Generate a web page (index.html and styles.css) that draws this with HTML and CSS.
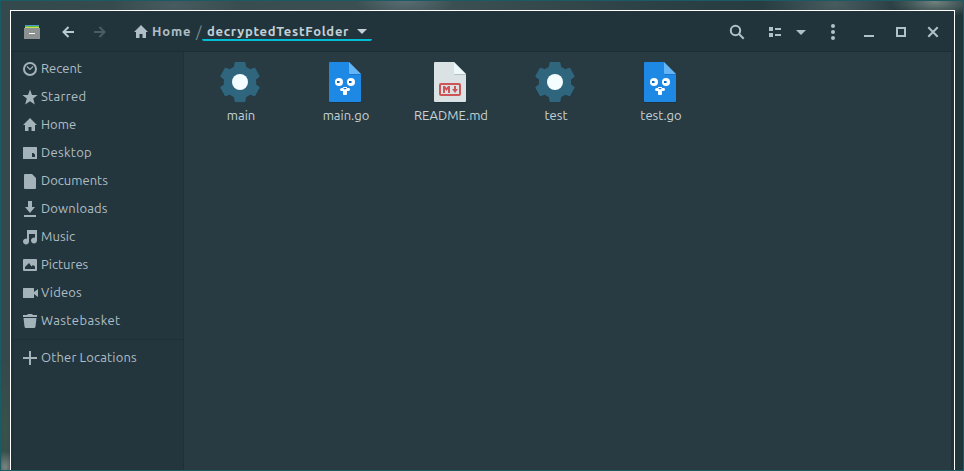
FILE: index.html
```html
<!DOCTYPE html>
<html lang="en">
<head>
<meta charset="utf-8">
<title>decryptedTestFolder</title>
<link rel="stylesheet" href="styles.css">
</head>
<body>
<svg class="defs" aria-hidden="true">
  <symbol id="house" viewBox="0 0 14 13"><path d="M7 0 0 7h2v6h3.500V9h3v4H12V7h2z"/></symbol>
  <symbol id="gear" viewBox="0 0 40 41">
    <path class="gear-shadow" d="M15 2h10l1 5 4 2 5-2 5 8-4 4v4l4 4-5 8-5-2-4 2-1 5H15l-1-5-4-2-5 2-5-8 4-4v-4l-4-4 5-8 5 2 4-2z"/>
    <path class="gear-body" d="M15.4 0h9.2q.7 0 .8.8l.8 4.2q2.2.8 4 2.2l4-1.4q.7-.2 1 .3l4.400 7.800q.3.700-.2 1.100L36 17.800q.4 2.200 0 4.400l3.400 2.800q.5.400.2 1.100l-4.400 7.800q-.3.500-1 .3l-4-1.400q-1.800 1.400-4 2.200l-.8 4.200q-.1.800-.8.800h-9.200q-.7 0-.8-.8l-.8-4.200q-2.200-.8-4-2.200l-4 1.400q-.7.200-1-.3L.4 26.100q-.3-.7.2-1.100L4 22.200q-.4-2.200 0-4.400L.6 15q-.5-.4-.2-1.100l4.400-7.800q.3-.5 1-.3l4 1.400q1.800-1.400 4-2.200l.8-4.200q.1-.8.800-.8z"/>
    <circle cx="20" cy="20" r="8" fill="#f4fdff"/>
  </symbol>
  <symbol id="gofile" viewBox="0 0 40 41">
    <path fill="#1d343e" d="M5 2h31v38q0 1-1 1H5q-1 0-1-1V3z"/>
    <path fill="#1e88e5" d="M5 0h19l12 12v27q0 1-1 1H5q-1 0-1-1V1q0-1 1-1z"/>
    <path fill="#283b42" d="M24 0h12v12z"/>
    <path fill="#1976d2" d="M24 12h12v1H25z"/>
    <path fill="#64b5f6" d="M24 0l12 12H25q-1 0-1-1z"/>
    <circle cx="14" cy="20" r="4" fill="#fff"/><circle cx="26" cy="20" r="4" fill="#fff"/>
    <path fill="#0d67bd" d="M12 19h2v2h-2zM24 19h2v2h-2z"/><path fill="#68aeea" d="M14 19h1v2h-1zM26 19h1v2h-1z"/>
    <path fill="#fff" d="M17 26h1v-1h4v1h2q1 0 1 1.500T23 29h-1v3q0 1-1 1h-2q-1 0-1-1v-3h-1q-2 0-2-1.500T17 26z"/>
    <path fill="#1976d2" d="M18.500 26h3v.5l-1 .8h-1l-1-.8z"/>
  </symbol>
  <symbol id="mdfile" viewBox="0 0 40 41">
    <path fill="#1d343e" d="M5 2h31v38q0 1-1 1H5q-1 0-1-1V3z"/>
    <path fill="#dae2e4" d="M5 0h19l12 12v27q0 1-1 1H5q-1 0-1-1V1q0-1 1-1z"/>
    <path fill="#283b42" d="M24 0h12v12z"/>
    <path fill="#b5bfc2" d="M24 12h12v1H25z"/>
    <path fill="#edf8fa" d="M24 0l12 12H25q-1 0-1-1z"/>
    <rect x="10" y="22" width="20" height="11" rx="1" fill="none" stroke="#cf5457" stroke-width="2"/>
    <path fill="#cf5457" d="M13 24h2l1.500 2 1.500-2h2v7h-2v-4l-1.500 2-1.500-2v4h-2zM24 24h2v3h2l-3 4-3-4h2z"/>
  </symbol>
</svg>

<main class="window">
  <header class="titlebar">
    <svg class="app" viewBox="0 0 16 14"><path fill="#5294c4" d="M1 0h14v1H1z"/><path fill="#50c44b" d="M1 1h14v1H1z"/><path fill="#d4d84d" d="M1 2h14v1H1z"/><path fill="#8c9291" d="M0 3h16v10.500q0 .5-.5.500H.5q-.5 0-.5-.5z"/><path fill="#fff" d="M5 8h6v1H5z"/></svg>
    <svg class="arrow" viewBox="0 0 12 12"><path d="M12 6H1.500M6.500 1l-5 5 5 5"/></svg>
    <svg class="arrow forward" viewBox="0 0 12 12"><path d="M0 6h10.500M5.500 1l5 5-5 5"/></svg>
    <nav class="path">
      <svg class="path-home"><use href="#house"/></svg>
      <span class="crumb">Home</span>
      <span class="slash">/</span>
      <span class="current"><span class="folder">decryptedTestFolder</span><svg class="caret" viewBox="0 0 10 5"><path d="M0 0h10L5 5z"/></svg></span>
    </nav>
    <div class="controls">
      <svg viewBox="0 0 16 16"><g fill="none" stroke="currentColor" stroke-width="2"><circle cx="6.500" cy="6.500" r="4.700"/><path d="M10 10l4.700 4.700"/></g></svg>
      <svg viewBox="0 0 16 16"><path d="M2 3h4v4H2zM2 9h4v4H2zM8 4h6v2H8zM8 10h6v2H8z"/></svg>
      <svg class="menu-caret" viewBox="0 0 16 16"><path d="M3 6h10l-5 5z"/></svg>
      <svg viewBox="0 0 16 16"><circle cx="8" cy="2" r="2"/><circle cx="8" cy="8" r="2"/><circle cx="8" cy="14" r="2"/></svg>
      <svg viewBox="0 0 16 16"><path d="M3 11h10v2H3z"/></svg>
      <svg viewBox="0 0 16 16"><path d="M4 4h8v8H4z" fill="none" stroke="currentColor" stroke-width="2"/></svg>
      <svg viewBox="0 0 16 16"><path d="M3.300 3.300l9.400 9.400M12.700 3.300l-9.400 9.400" stroke="currentColor" stroke-width="2"/></svg>
    </div>
  </header>

  <div class="body">
    <aside class="sidebar">
      <ul>
        <li><svg viewBox="0 0 16 16"><circle cx="8" cy="8" r="6" fill="none" stroke="currentColor" stroke-width="2"/><path d="M5 5.500l3 3 3-3" fill="none" stroke="currentColor" stroke-width="1.200"/></svg><span>Recent</span></li>
        <li><svg viewBox="0 0 16 16"><path d="M8 .5l2 5.500h5.600l-4.400 3.600 1.600 5.900L8 12.200l-4.800 3.300 1.600-5.900L.4 6H6z"/></svg><span class="loose">Starred</span></li>
        <li><svg viewBox="0 0 16 16"><path d="M8 1 1 8h2v6h3.500v-4h3v4H13V8h2z"/></svg><span>Home</span></li>
        <li><svg viewBox="0 0 16 16"><path fill-rule="evenodd" d="M1.500 2h13q.5 0 .5.500v11q0 .5-.5.500h-13q-.5 0-.5-.5v-11q0-.5.500-.5zM10 8v4h3v-2.500L11.500 8z"/></svg><span class="loose">Desktop</span></li>
        <li><svg viewBox="0 0 16 16"><path d="M3 1h7l4 4v10q0 1-1 1H3q-1 0-1-1V2q0-1 1-1z"/></svg><span>Documents</span></li>
        <li><svg viewBox="0 0 16 16"><path d="M6 0h4v6h3l-5 6-5-6h3zM2 14h12v2H2z"/></svg><span class="open">Downloads</span></li>
        <li><svg viewBox="0 0 16 16"><path d="M5 1h10v10.500a3 3 0 1 1-2-2.800V5H7v7.500a3 3 0 1 1-2-2.800z"/></svg><span class="open">Music</span></li>
        <li><svg viewBox="0 0 16 16"><path fill-rule="evenodd" d="M2 2h12q1 0 1 1v10q0 1-1 1H2q-1 0-1-1V3q0-1 1-1zM3 12h10V9.500L11 8 9.500 9.500 7 6 3 10z"/></svg><span>Pictures</span></li>
        <li><svg viewBox="0 0 16 16"><path d="M1.500 3h10q.5 0 .5.500V7l4-3v8l-4-3v3.500q0 .5-.5.500h-10q-.5 0-.5-.5v-9q0-.5.500-.5z"/></svg><span class="open">Videos</span></li>
        <li><svg viewBox="0 0 16 16"><path d="M1 2h4l1-1h4l1 1h4v2H1zM1.500 5h13l-1 8.500q-.2 1.500-1.500 1.500H4q-1.300 0-1.500-1.500z"/></svg><span class="wide">Wastebasket</span></li>
      </ul>
      <div class="other"><svg viewBox="0 0 16 16"><path d="M7 1h2v6h6v2H9v6H7V9H1V7h6z"/></svg><span class="open">Other Locations</span></div>
    </aside>
    <section class="files">
      <figure><svg><use href="#gear"/></svg><figcaption>main</figcaption></figure>
      <figure><svg><use href="#gofile"/></svg><figcaption>main.go</figcaption></figure>
      <figure><svg><use href="#mdfile"/></svg><figcaption>README.md</figcaption></figure>
      <figure><svg><use href="#gear"/></svg><figcaption>test</figcaption></figure>
      <figure><svg><use href="#gofile"/></svg><figcaption>test.go</figcaption></figure>
    </section>
  </div>
</main>
</body>
</html>
```
FILE: styles.css
```css
* { box-sizing: border-box; }
body {
  margin: 0;
  height: 471px;
  overflow: hidden;
  padding: 9px 8px 0 9px;
  border: 1px solid #1b5c64;
  background:
    radial-gradient(ellipse 45px 16px at 935px 2px, #70817e, transparent),
    radial-gradient(ellipse 75px 30px at 835px 4px, #485c60, transparent),
    radial-gradient(ellipse 50px 18px at 405px 0, #5b6e73, transparent),
    radial-gradient(ellipse 65px 20px at 175px 5px, #485b60, transparent),
    radial-gradient(ellipse 10px 16px at 5px 467px, #7b8581, transparent),
    radial-gradient(ellipse 14px 70px at 5px 430px, #38524c, transparent),
    linear-gradient(90deg, #34494b 0, #3d5054 45%, #2b4044 70%, #20353a);
  background-repeat: no-repeat;
  font: 13px/16px Ubuntu, "Noto Sans", sans-serif;
  color: #b0bec5;
}
svg { display: block; flex: none; fill: currentColor; overflow: visible; }
.defs { width: 0; height: 0; position: absolute; }
.window {
  height: 460px;
  border: 1px solid #fff;
  border-bottom: 0;
  background: #22343b;
}
.titlebar {
  height: 41px;
  display: flex;
  align-items: center;
  padding: 1px 13px 0 13px;
  border-bottom: 1px solid #1c2d34;
}
.app { width: 16px; height: 14px; margin-top: 1px; }
.arrow { width: 12px; height: 12px; margin-left: 22px; margin-top: 1px; fill: none; stroke: #b9cbd1; stroke-width: 2; }
.forward { margin-left: 20px; stroke: #4b5d64; }
.path { display: flex; align-items: center; margin-left: 28px; height: 20px; font-weight: 700; }
.path-home { width: 14px; height: 13px; margin-right: 4px; }
.crumb { width: 39px; margin-top: -2px; letter-spacing: .85px; }
.slash { width: 11px; padding-left: 5px; font-size: 15px; font-weight: 400; color: #7c8c92; }
.current { display: flex; align-items: center; width: 170px; height: 18px; padding: 1px 5px 0; border-bottom: 2px solid #00bcd4; color: #c3d0d5; border-radius: 2px; }
.folder { width: 150px; letter-spacing: .72px; }
.caret { width: 10px; height: 5px; }
.controls { display: flex; margin-left: auto; color: #b0c1c8; }
.controls svg { width: 16px; height: 16px; margin-left: 16px; }
.controls svg:nth-child(2) { margin-left: 22px; }
.controls .menu-caret { margin-left: 10px; }
.controls svg:nth-child(5) { margin-left: 20px; }
.body { height: 418px; display: flex; border: solid #20323a; border-width: 0 3px; }
.sidebar { width: 170px; flex: none; background: #23363d; border-right: 1px solid #1f3138; }
.sidebar ul { margin: 0; padding: 3px 0 4px; list-style: none; }
.sidebar li, .other { height: 28px; display: flex; align-items: center; padding-left: 8px; }
.sidebar svg { width: 16px; height: 16px; margin-right: 3px; color: #a3b3b9; }
.sidebar span { margin-top: -2px; }
.loose { letter-spacing: .3px; }
.open { letter-spacing: .15px; }
.wide { letter-spacing: .42px; }
.other { height: 36px; border-top: 1px solid #1e3037; }
.files { flex: 1; display: grid; grid-template-columns: repeat(5, 105px); align-content: start; padding: 10px 0 0 4px; background: #283b42; }
.files figure { margin: 0; display: flex; flex-direction: column; align-items: center; }
.files figure svg { width: 40px; height: 41px; margin: 0 1px 0 0; }
.files figcaption { margin: 4px 0 0 1px; color: #c6d2d6; }
.gear-body { fill: #30657e; }
.gear-shadow { fill: #22343c; }
```
